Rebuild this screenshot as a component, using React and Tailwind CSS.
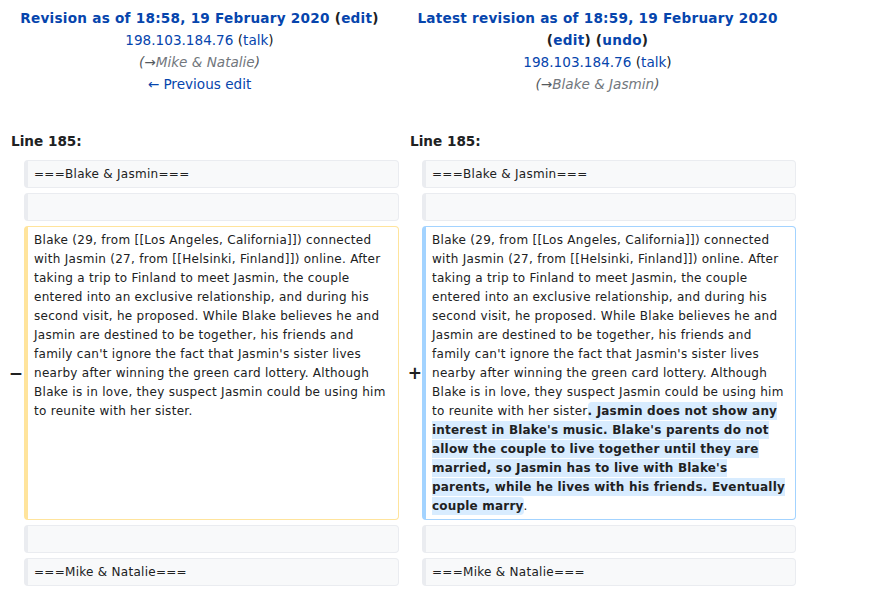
import React from 'react';

const link = 'text-[#0645ad]';

const Context = ({ children }) => (
  <div className="bg-[#f8f9fa] border border-[#eaecf0] border-l-4 rounded-[4px] pl-[6px] pr-[6px] pt-[4px] pb-[3px] min-h-[28px]">
    {children || '\u00a0'}
  </div>
);

const Summary = ({ section }) => (
  <div className="italic text-[#72777d]">
    <span className="text-[#54595d]">(</span>
    <span className="text-[#54595d]">→</span>
    {section}
    <span className="text-[#54595d]">)</span>
  </div>
);

const Talk = () => (
  <div>
    <span className={link}>198.103.184.76</span> (<span className={link}>talk</span>)
  </div>
);

const baseText =
  "Blake (29, from [[Los Angeles, California]]) connected with Jasmin (27, from [[Helsinki, Finland]]) online. After taking a trip to Finland to meet Jasmin, the couple entered into an exclusive relationship, and during his second visit, he proposed. While Blake believes he and Jasmin are destined to be together, his friends and family can't ignore the fact that Jasmin's sister lives nearby after winning the green card lottery. Although Blake is in love, they suspect Jasmin could be using him to reunite with her sister";

const addedStart =
  ". Jasmin does not show any interest in Blake's music. Blake's parents do not allow the couple to live together until they are married, so Jasmin has to live with Blake's ";
const addedEnd = "parents, while he lives with his friends. Eventually couple marry";

export default function App() {
  return (
    <div className="min-h-screen bg-white text-[#202122] font-['DejaVu_Sans','Liberation_Sans',sans-serif]">
      {/* Revision headers */}
      <div className="flex pt-[7px] text-[13.6px] leading-[22px] text-center">
        <div className="w-[399px]">
          <div className="font-bold tracking-[0.25px]">
            <span className={link}>Revision as of 18:58, 19 February 2020</span> (<span className={link}>edit</span>)
          </div>
          <Talk />
          <Summary section="Mike & Natalie" />
          <div className={link}>← Previous edit</div>
        </div>
        <div className="w-[397px]">
          <div className="font-bold tracking-[0.25px]">
            <span className={link}>Latest revision as of 18:59, 19 February 2020</span>
          </div>
          <div className="font-bold tracking-[0.25px]">
            (<span className={link}>edit</span>) (<span className={link}>undo</span>)
          </div>
          <Talk />
          <Summary section="Blake & Jasmin" />
        </div>
      </div>

      {/* Line numbers */}
      <div className="flex mt-[35px] text-[13.6px] leading-[22px] font-bold">
        <div className="w-[399px] pl-[11px]">Line 185:</div>
        <div className="w-[397px] pl-[11px]">Line 185:</div>
      </div>

      {/* Diff rows */}
      <div className="grid grid-cols-[24px_375px_23px_374px] gap-y-[5px] mt-[8px] text-[12px] leading-[19px] tracking-[0.28px]">
        <div />
        <Context>===Blake &amp; Jasmin===</Context>
        <div />
        <Context>===Blake &amp; Jasmin===</Context>

        <div />
        <Context />
        <div />
        <Context />

        <div className="flex items-center justify-end pr-[1px] font-bold text-[17px] leading-[20px] tracking-normal">−</div>
        <div className="bg-white border border-[#ffe49c] border-l-4 rounded-[4px] pl-[6px] pr-[6px] pt-[4px] pb-[3px]">
          {baseText}.
        </div>
        <div className="flex items-center justify-end font-bold text-[17px] leading-[20px] tracking-normal">+</div>
        <div className="bg-white border border-[#a3d3ff] border-l-4 rounded-[4px] pl-[6px] pr-[2px] pt-[4px] pb-[3px]">
          {baseText}
          <span className="bg-[#d8ecff] font-bold tracking-[0.2px] rounded-[4px] py-[2px]">
            {addedStart}
            <br />
            {addedEnd}
          </span>
          .
        </div>

        <div />
        <Context />
        <div />
        <Context />

        <div />
        <Context>===Mike &amp; Natalie===</Context>
        <div />
        <Context>===Mike &amp; Natalie===</Context>
      </div>
    </div>
  );
}
